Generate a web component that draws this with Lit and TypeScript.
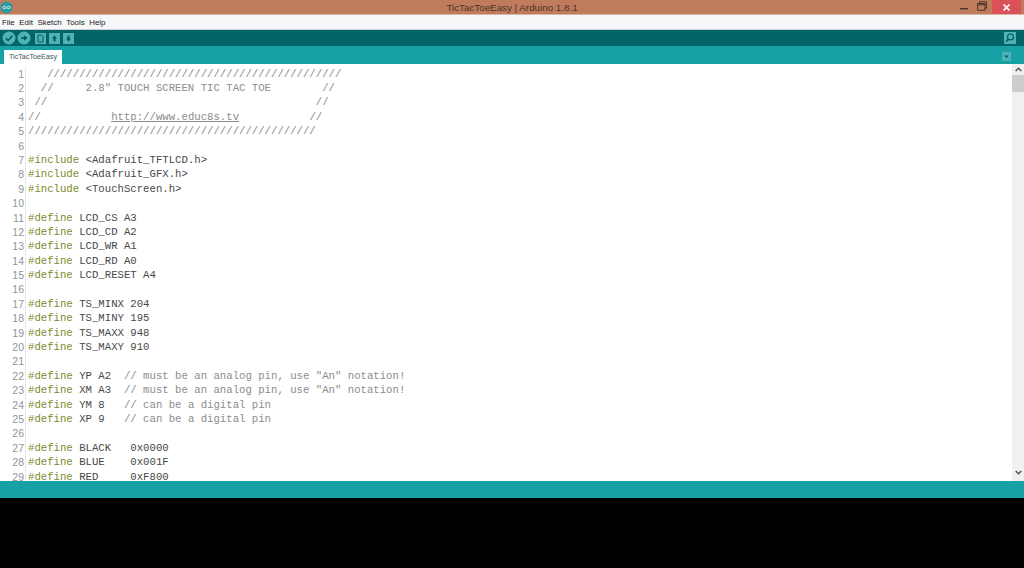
import { LitElement, html, css, svg } from "lit";
import { customElement } from "lit/decorators.js";

type Seg = [string, string];
const K = "k", C = "c", T = "t", U = "u";
const def = (rest: string, comment = ""): Seg[] => {
  const s: Seg[] = [[K, "#define"], [T, " " + rest]];
  if (comment) s.push([C, comment]);
  return s;
};
const inc = (h: string): Seg[] => [[K, "#include"], [T, " " + h]];
const LINES: Seg[][] = [
  [[C, "   " + "/".repeat(46)]],
  [[C, '  //     2.8" TOUCH SCREEN TIC TAC TOE        //']],
  [[C, " //" + " ".repeat(42) + "//"]],
  [[C, "//" + " ".repeat(11)], [U, "http://www.educ8s.tv"], [C, " ".repeat(11) + "//"]],
  [[C, "/".repeat(45)]],
  [],
  inc("<Adafruit_TFTLCD.h>"),
  inc("<Adafruit_GFX.h>"),
  inc("<TouchScreen.h>"),
  [],
  def("LCD_CS A3"),
  def("LCD_CD A2"),
  def("LCD_WR A1"),
  def("LCD_RD A0"),
  def("LCD_RESET A4"),
  [],
  def("TS_MINX 204"),
  def("TS_MINY 195"),
  def("TS_MAXX 948"),
  def("TS_MAXY 910"),
  [],
  def("YP A2  ", '// must be an analog pin, use "An" notation!'),
  def("XM A3  ", '// must be an analog pin, use "An" notation!'),
  def("YM 8   ", "// can be a digital pin"),
  def("XP 9   ", "// can be a digital pin"),
  [],
  def("BLACK   0x0000"),
  def("BLUE    0x001F"),
  def("RED     0xF800"),
];

@customElement("app-root")
export class AppRoot extends LitElement {
  static styles = css`
    :host { display: block; width: 1024px; height: 568px; background: #000; overflow: hidden; font-family: "Liberation Sans", Arial, sans-serif; }
    .window { display: flex; flex-direction: column; height: 498px; }
    .title { height: 14px; flex: none; background: #bf7b5c; border-bottom: 1px solid #d9b5a3; display: flex; align-items: center; position: relative; }
    .title .logo { margin-left: 0; display: block; }
    .title .name { position: absolute; left: 0; right: 0; top: 1px; text-align: center; font-size: 9.8px; line-height: 14px; color: #4a3328; }
    .winbtns { margin-left: auto; margin-right: 3px; display: flex; align-items: flex-start; height: 14px; }
    .winbtns .min, .winbtns .max { width: 18px; display: flex; justify-content: center; height: 14px; }
    .winbtns .min { align-items: flex-end; padding-bottom: 0; }
    .winbtns .min svg { margin-bottom: 4px; }
    .winbtns .max { align-items: flex-start; padding-top: 1px; box-sizing: border-box; }
    .winbtns .close { width: 29px; height: 14px; background: #d9525a; display: flex; align-items: center; justify-content: center; margin-left: 1px; }
    .menu { height: 14px; box-sizing: border-box; flex: none; background: #f6f7f9; display: flex; gap: 4.6px; padding: 1px 0 0 2px; font-size: 7.9px; line-height: 14px; color: #222; }
    .toolbar { height: 17px; flex: none; background: #006468; border-top: 1px solid #c9d3d4; box-sizing: border-box; display: flex; align-items: center; padding: 0 9px 0 2px; }
    .toolbar svg { display: block; }
    .toolbar .round { margin-right: 1px; }
    .toolbar .sq1 { margin-left: 3px; }
    .toolbar .sq { margin-right: 3px; }
    .toolbar .mon { margin-left: auto; margin-right: -1px; }
    .tabs { height: 18px; flex: none; background: #17a1a5; display: flex; align-items: flex-end; padding-left: 4px; position: relative; }
    .tab { height: 14px; width: 58px; background: #fff; color: #3d5558; font-size: 7.2px; line-height: 14px; text-align: center; }
    .tabmenu { position: absolute; right: 13px; top: 6px; display: block; }
    .editor { flex: 1; min-height: 0; background: #fff; display: flex; overflow: hidden; }
    .code { flex: 1; min-width: 0; overflow: hidden; padding-top: 2.6px; font-family: "Liberation Mono", "Courier New", monospace; font-size: 10.667px; line-height: 14.4px; }
    .row { display: flex; height: 14.4px; white-space: pre; }
    .num { width: 24px; flex: none; text-align: right; color: #8f9698; font-family: "Liberation Sans", Arial, sans-serif; font-size: 10.5px; box-sizing: border-box; }
    .gut { width: 1px; flex: none; background: #e4e8e8; margin: 0 2.5px 0 0.5px; }
    .k { color: #7a8c2a; }
    .c { color: #8c8c8c; }
    .t { color: #484848; }
    .u { color: #8c8c8c; text-decoration: underline; }
    .sb { width: 12px; flex: none; background: #f0f0f0; display: flex; flex-direction: column; align-items: center; }
    .sb svg { display: block; }
    .sb .thumb { width: 12px; height: 17px; background: #cdcdcd; }
    .sb .down { margin-top: auto; margin-bottom: 6px; }
    .sb .up { margin: 3px 0 3px; }
    .status { height: 17px; flex: none; background: #17a1a5; }
  `;

  private sq(inner: unknown, cls = "") {
    return html`<svg class="sq ${cls}" width="11" height="11" viewBox="0 0 11 11">
      <rect width="11" height="11" fill="#4eb3b6"></rect>
      ${inner}
    </svg>`;
  }

  render() {
    const ic = "#00585c";
    return html`
      <div class="window">
        <div class="title">
          <svg class="logo" width="13" height="13" viewBox="0 0 13 13">
            <circle cx="6.5" cy="6.5" r="6" fill="#2a9a9f"></circle>
            <path d="M6.5 6.5c-1-1.5-3.6-1.5-3.6 0s2.6 1.5 3.6 0c1-1.5 3.6-1.5 3.6 0s-2.6 1.5-3.6 0" fill="none" stroke="#e8f4f4" stroke-width="1"></path>
          </svg>
          <div class="name">TicTacToeEasy | Arduino 1.8.1</div>
          <div class="winbtns">
            <div class="min"><svg width="8" height="2" viewBox="0 0 8 2"><rect y="0" width="8" height="1.4" fill="#4a3328"></rect></svg></div>
            <div class="max"><svg width="10" height="10" viewBox="0 0 10 10"><path d="M2.5 2V.7h7v6.6H8M.7 2.5h7.2v6.8H.7z M.7 2.5h7.2v1.3H.7z" fill="none" stroke="#4a3328" stroke-width="1"></path></svg></div>
            <div class="close"><svg width="9" height="9" viewBox="0 0 9 9"><path d="M1.5 1.5l6 6M7.5 1.5l-6 6" stroke="#fff" stroke-width="1.7" fill="none"></path></svg></div>
          </div>
        </div>
        <div class="menu"><span>File</span><span>Edit</span><span>Sketch</span><span>Tools</span><span>Help</span></div>
        <div class="toolbar">
          <svg class="round" width="14" height="14" viewBox="0 0 14 14">
            <circle cx="7" cy="7" r="6.5" fill="#4eb3b6"></circle>
            <path d="M3.8 7.2l2.3 2.3 4.2-4.7" fill="none" stroke="${ic}" stroke-width="1.5"></path>
          </svg>
          <svg class="round" width="14" height="14" viewBox="0 0 14 14">
            <circle cx="7" cy="7" r="6.5" fill="#4eb3b6"></circle>
            <path d="M4 7h5M7 5L9.4 7 7 9" fill="none" stroke="${ic}" stroke-width="1.5"></path>
          </svg>
          ${this.sq(svg`<path d="M3 2h3.5L8 3.5V9H3z" fill="none" stroke="${ic}" stroke-width="1"></path>`, "sq1")}
          ${this.sq(svg`<path d="M5.5 2.5L8 5.5H6.5V8.5h-2V5.5H3z" fill="${ic}"></path>`)}
          ${this.sq(svg`<path d="M5.5 8.5L3 5.5h1.5V2.5h2v3H8z" fill="${ic}"></path>`)}
          <svg class="mon" width="12" height="12" viewBox="0 0 12 12">
            <rect width="12" height="12" fill="#4eb3b6"></rect>
            <circle cx="6.5" cy="5" r="3" fill="none" stroke="${ic}" stroke-width="1.1"></circle>
            <path d="M4.3 7.3L2 9.8" stroke="${ic}" stroke-width="1.3"></path>
          </svg>
        </div>
        <div class="tabs">
          <div class="tab">TicTacToeEasy</div>
          <svg class="tabmenu" width="9" height="9" viewBox="0 0 9 9">
            <rect width="9" height="9" fill="#4eb3b6"></rect>
            <path d="M2.2 3.5h4.6L4.5 6z" fill="${ic}"></path>
          </svg>
        </div>
        <div class="editor">
          <div class="code">
            ${LINES.map(
              (segs, i) => html`<div class="row"><span class="num">${i + 1}</span><span class="gut"></span><span>${segs.map(
                ([c, t]) => html`<span class=${c}>${t}</span>`
              )}</span></div>`
            )}
          </div>
          <div class="sb">
            <svg class="up" width="7" height="5" viewBox="0 0 7 5"><path d="M.7 4L3.5 1.2 6.3 4" fill="none" stroke="#505050" stroke-width="1.4"></path></svg>
            <div class="thumb"></div>
            <svg class="down" width="7" height="5" viewBox="0 0 7 5"><path d="M.7 1L3.5 3.8 6.3 1" fill="none" stroke="#505050" stroke-width="1.4"></path></svg>
          </div>
        </div>
        <div class="status"></div>
      </div>
    `;
  }
}
